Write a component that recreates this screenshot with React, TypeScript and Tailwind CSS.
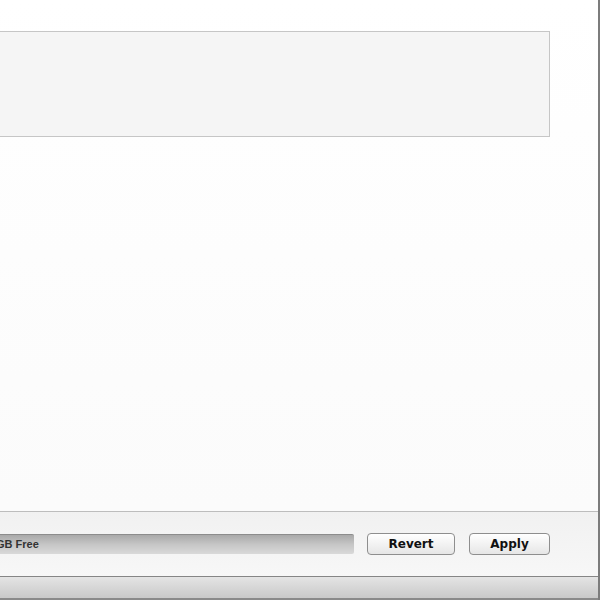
export default function App() {
  return (
    <div className="w-[600px] h-[600px] flex flex-col bg-white border-r-2 border-[#7c7c7c] overflow-hidden font-['Liberation_Sans',Arial,sans-serif]">
      {/* content area */}
      <div className="h-[511px] pt-[31px] pr-[48px] bg-gradient-to-b from-white to-[#fbfbfb]">
        <div className="h-[106px] bg-[#f5f5f5] border border-l-0 border-[#c6c6c6]" />
      </div>

      {/* footer with capacity bar */}
      <div className="h-[65px] flex items-center border-t border-[#bdbdbd] bg-gradient-to-b from-[#f1f1f1] to-[#f7f7f7] pr-[48px]">
        <div className="w-[354px] h-[20px] flex items-center border-t border-[#8c8c8c] rounded-r-[2px] bg-gradient-to-b from-[#a9a9a9] via-[#c6c6c6] to-[#d9d9d9] overflow-hidden">
          <span className="-ml-[4px] text-[11px] font-bold text-[#333] leading-none whitespace-nowrap">GB Free</span>
        </div>
        <button className="ml-[13px] w-[88px] h-[22px] rounded-[4px] border border-[#8e8e8e] bg-gradient-to-b from-[#ffffff] to-[#e6e6e6] text-[12px] font-bold text-[#111] leading-none font-['DejaVu_Sans',Verdana,sans-serif]">
          Revert
        </button>
        <button className="ml-[14px] w-[81px] h-[22px] rounded-[4px] border border-[#8e8e8e] bg-gradient-to-b from-[#ffffff] to-[#e6e6e6] text-[12px] font-bold text-[#111] leading-none font-['DejaVu_Sans',Verdana,sans-serif]">
          Apply
        </button>
      </div>

      {/* status strip */}
      <div className="flex-1 border-t border-[#858585] border-b-2 border-b-[#8a8a8a] bg-gradient-to-b from-[#e4e4e4] to-[#c9c9c9]" />
    </div>
  );
}
